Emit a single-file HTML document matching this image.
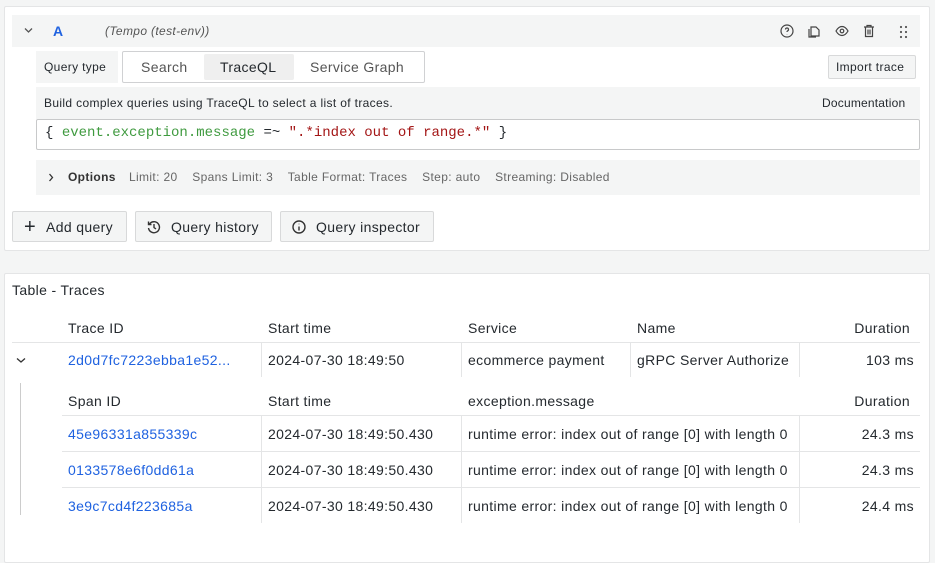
<!DOCTYPE html>
<html><head><style>
*{box-sizing:border-box;margin:0;padding:0}
body{width:935px;height:555px;background:#f4f5f5;font-family:"Liberation Sans",sans-serif;color:#24292e;position:relative;overflow:hidden;letter-spacing:0.35px}
.abs{position:absolute}
.panel{position:absolute;background:#fff;border:1px solid #e4e5e6;border-radius:2px}
.t12{font-size:12px}
.t14{font-size:14px}
.btn{position:absolute;background:#f4f5f5;border:1px solid #d8d9da;border-radius:2px;font-size:14px;display:flex;align-items:center;color:#24292e}
.link{color:#1f62e0}
.hl{position:absolute;height:1px;background:#e4e5e6}
.vl{position:absolute;width:1px;background:#e4e5e6}
.c{position:absolute;font-size:14px;white-space:nowrap}
</style></head><body>
<div class="panel" style="left:4px;top:6px;width:926px;height:245px"></div>
<div class="abs" style="left:12px;top:15px;width:908px;height:32px;background:#f4f5f5"></div>
<svg class="abs" style="left:24px;top:27px" width="9" height="7"><path d="M1 1.5L4.5 5L8 1.5" fill="none" stroke="#555" stroke-width="1.3"/></svg>
<div class="abs" style="left:53px;top:23px;font-size:14px;font-weight:bold;color:#1f62e0">A</div>
<div class="abs t12" style="left:105px;top:24px;font-style:italic;color:#555">(Tempo (test-env))</div>
<svg class="abs" style="left:778px;top:23px" width="140" height="16" fill="none" stroke="#444" stroke-width="1.2">
<circle cx="9" cy="8" r="6"/><path d="M7.5 6.5a1.5 1.5 0 1 1 2 1.4c-.5.2-.5.6-.5 1.1M9 11v.3"/>
<path d="M33 4h5l3 3v6h-8z M31 6v8h7"/>
<path d="M58 8c2-3.5 4-4.5 6-4.5s4 1 6 4.5c-2 3.5-4 4.5-6 4.5s-4-1-6-4.5z"/><circle cx="64" cy="8" r="1.8"/>
<path d="M86 4h10M89 4V2.5h4V4M87.5 4v9.5h7V4M90 6.5v5M92 6.5v5"/>
<g fill="#555" stroke="none"><circle cx="123" cy="4" r="1.1"/><circle cx="128" cy="4" r="1.1"/><circle cx="123" cy="9" r="1.1"/><circle cx="128" cy="9" r="1.1"/><circle cx="123" cy="14" r="1.1"/><circle cx="128" cy="14" r="1.1"/></g>
</svg>
<div class="abs t12" style="left:36px;top:51px;width:82px;height:32px;background:#f4f5f5;padding:9px 0 0 8px;font-weight:500">Query type</div>
<div class="abs" style="left:122px;top:51px;width:303px;height:32px;border:1px solid #d0d1d3;border-radius:2px;background:#fff"></div>
<div class="abs" style="left:204px;top:54px;width:90px;height:26px;background:#efefef;border-radius:2px"></div>
<div class="abs t14" style="left:141px;top:59px;color:#555">Search</div>
<div class="abs t14" style="left:220px;top:59px">TraceQL</div>
<div class="abs t14" style="left:310px;top:59px;color:#555">Service Graph</div>
<div class="btn t12" style="left:828px;top:55px;width:88px;height:24px;padding-left:7px;font-size:12px">Import trace</div>
<div class="abs" style="left:36px;top:87px;width:884px;height:32px;background:#f4f5f5"></div>
<div class="abs t12" style="left:44px;top:96px">Build complex queries using TraceQL to select a list of traces.</div>
<div class="abs t12" style="left:822px;top:96px;letter-spacing:0.2px">Documentation</div>
<div class="abs" style="left:36px;top:119px;width:884px;height:31px;background:#fff;border:1px solid #c8c9ca;border-radius:2px"></div>
<div class="abs" style="left:45px;top:125px;font-family:'Liberation Mono',monospace;font-size:14px;white-space:pre;letter-spacing:0">{ <span style="color:#3f9a3f">event.exception.message</span> =~ <span style="color:#a31515">".*index out of range.*"</span> }</div>
<div class="abs" style="left:36px;top:160px;width:884px;height:35px;background:#f4f5f5"></div>
<svg class="abs" style="left:48px;top:173px" width="6" height="9"><path d="M1.5 1L4.5 4.5L1.5 8" fill="none" stroke="#333" stroke-width="1.3"/></svg>
<div class="abs t12" style="left:68px;top:170px;font-weight:bold;color:#333">Options</div>
<div class="abs t12" style="left:129px;top:170px;color:#666;white-space:pre">Limit: 20    Spans Limit: 3    Table Format: Traces    Step: auto    Streaming: Disabled</div>
<div class="btn" style="left:12px;top:211px;width:115px;height:31px;padding-left:11px"><span style="font-size:20px;font-weight:300;margin-right:10px;line-height:1">+</span>Add query</div>
<div class="btn" style="left:135px;top:211px;width:137px;height:31px;padding-left:10px"><svg width="16" height="16" style="margin-right:9px" fill="none" stroke="#333" stroke-width="1.4"><path d="M3.5 5A5.5 5.5 0 1 1 2.5 9M2.5 2.5V5.5H5.5M8 5v3.5l2 1.5"/></svg>Query history</div>
<div class="btn" style="left:280px;top:211px;width:154px;height:31px;padding-left:10px"><svg width="16" height="16" style="margin-right:9px" fill="none" stroke="#333" stroke-width="1.4"><circle cx="8" cy="8" r="6"/><path d="M8 7.5v4M8 4.8v.4"/></svg>Query inspector</div>

<div class="panel" style="left:4px;top:273px;width:926px;height:290px"></div>
<div class="c" style="left:12px;top:282px">Table - Traces</div>
<div class="c" style="left:68px;top:320px">Trace ID</div>
<div class="c" style="left:268px;top:320px">Start time</div>
<div class="c" style="left:468px;top:320px">Service</div>
<div class="c" style="left:637px;top:320px">Name</div>
<div class="c" style="right:25px;top:320px">Duration</div>
<div class="hl" style="left:12px;top:342px;width:908px"></div>
<svg class="abs" style="left:16px;top:357px" width="10" height="7"><path d="M1 1.5L5 5L9 1.5" fill="none" stroke="#333" stroke-width="1.3"/></svg>
<div class="c link" style="left:68px;top:352px">2d0d7fc7223ebba1e52...</div>
<div class="c" style="left:268px;top:352px">2024-07-30 18:49:50</div>
<div class="c" style="left:468px;top:352px">ecommerce payment</div>
<div class="c" style="left:637px;top:352px">gRPC Server Authorize</div>
<div class="c" style="right:21px;top:352px">103 ms</div>
<div class="vl" style="left:261px;top:343px;height:34px"></div>
<div class="vl" style="left:630px;top:343px;height:34px"></div>
<div class="vl" style="left:799px;top:343px;height:34px"></div>
<div class="vl" style="left:461px;top:343px;height:34px"></div>
<div class="abs" style="left:20px;top:383px;width:1px;height:132px;background:#ccc"></div>
<div class="c" style="left:68px;top:393px">Span ID</div>
<div class="c" style="left:268px;top:393px">Start time</div>
<div class="c" style="left:468px;top:393px">exception.message</div>
<div class="c" style="right:25px;top:393px">Duration</div>
<div class="hl" style="left:62px;top:415px;width:858px"></div>
<div class="hl" style="left:62px;top:451px;width:858px"></div>
<div class="hl" style="left:62px;top:487px;width:858px"></div>
<div class="vl" style="left:261px;top:416px;height:107px"></div>
<div class="vl" style="left:461px;top:416px;height:107px"></div>
<div class="vl" style="left:799px;top:416px;height:107px"></div>
<div class="c link" style="left:68px;top:426px">45e96331a855339c</div>
<div class="c link" style="left:68px;top:462px">0133578e6f0dd61a</div>
<div class="c link" style="left:68px;top:498px">3e9c7cd4f223685a</div>
<div class="c" style="left:268px;top:426px">2024-07-30 18:49:50.430</div>
<div class="c" style="left:268px;top:462px">2024-07-30 18:49:50.430</div>
<div class="c" style="left:268px;top:498px">2024-07-30 18:49:50.430</div>
<div class="c" style="left:468px;top:426px;width:331px;overflow:hidden">runtime error: index out of range [0] with length 0</div>
<div class="c" style="left:468px;top:462px;width:331px;overflow:hidden">runtime error: index out of range [0] with length 0</div>
<div class="c" style="left:468px;top:498px;width:331px;overflow:hidden">runtime error: index out of range [0] with length 0</div>
<div class="c" style="right:21px;top:426px">24.3 ms</div>
<div class="c" style="right:21px;top:462px">24.3 ms</div>
<div class="c" style="right:21px;top:498px">24.4 ms</div>
</body></html>
